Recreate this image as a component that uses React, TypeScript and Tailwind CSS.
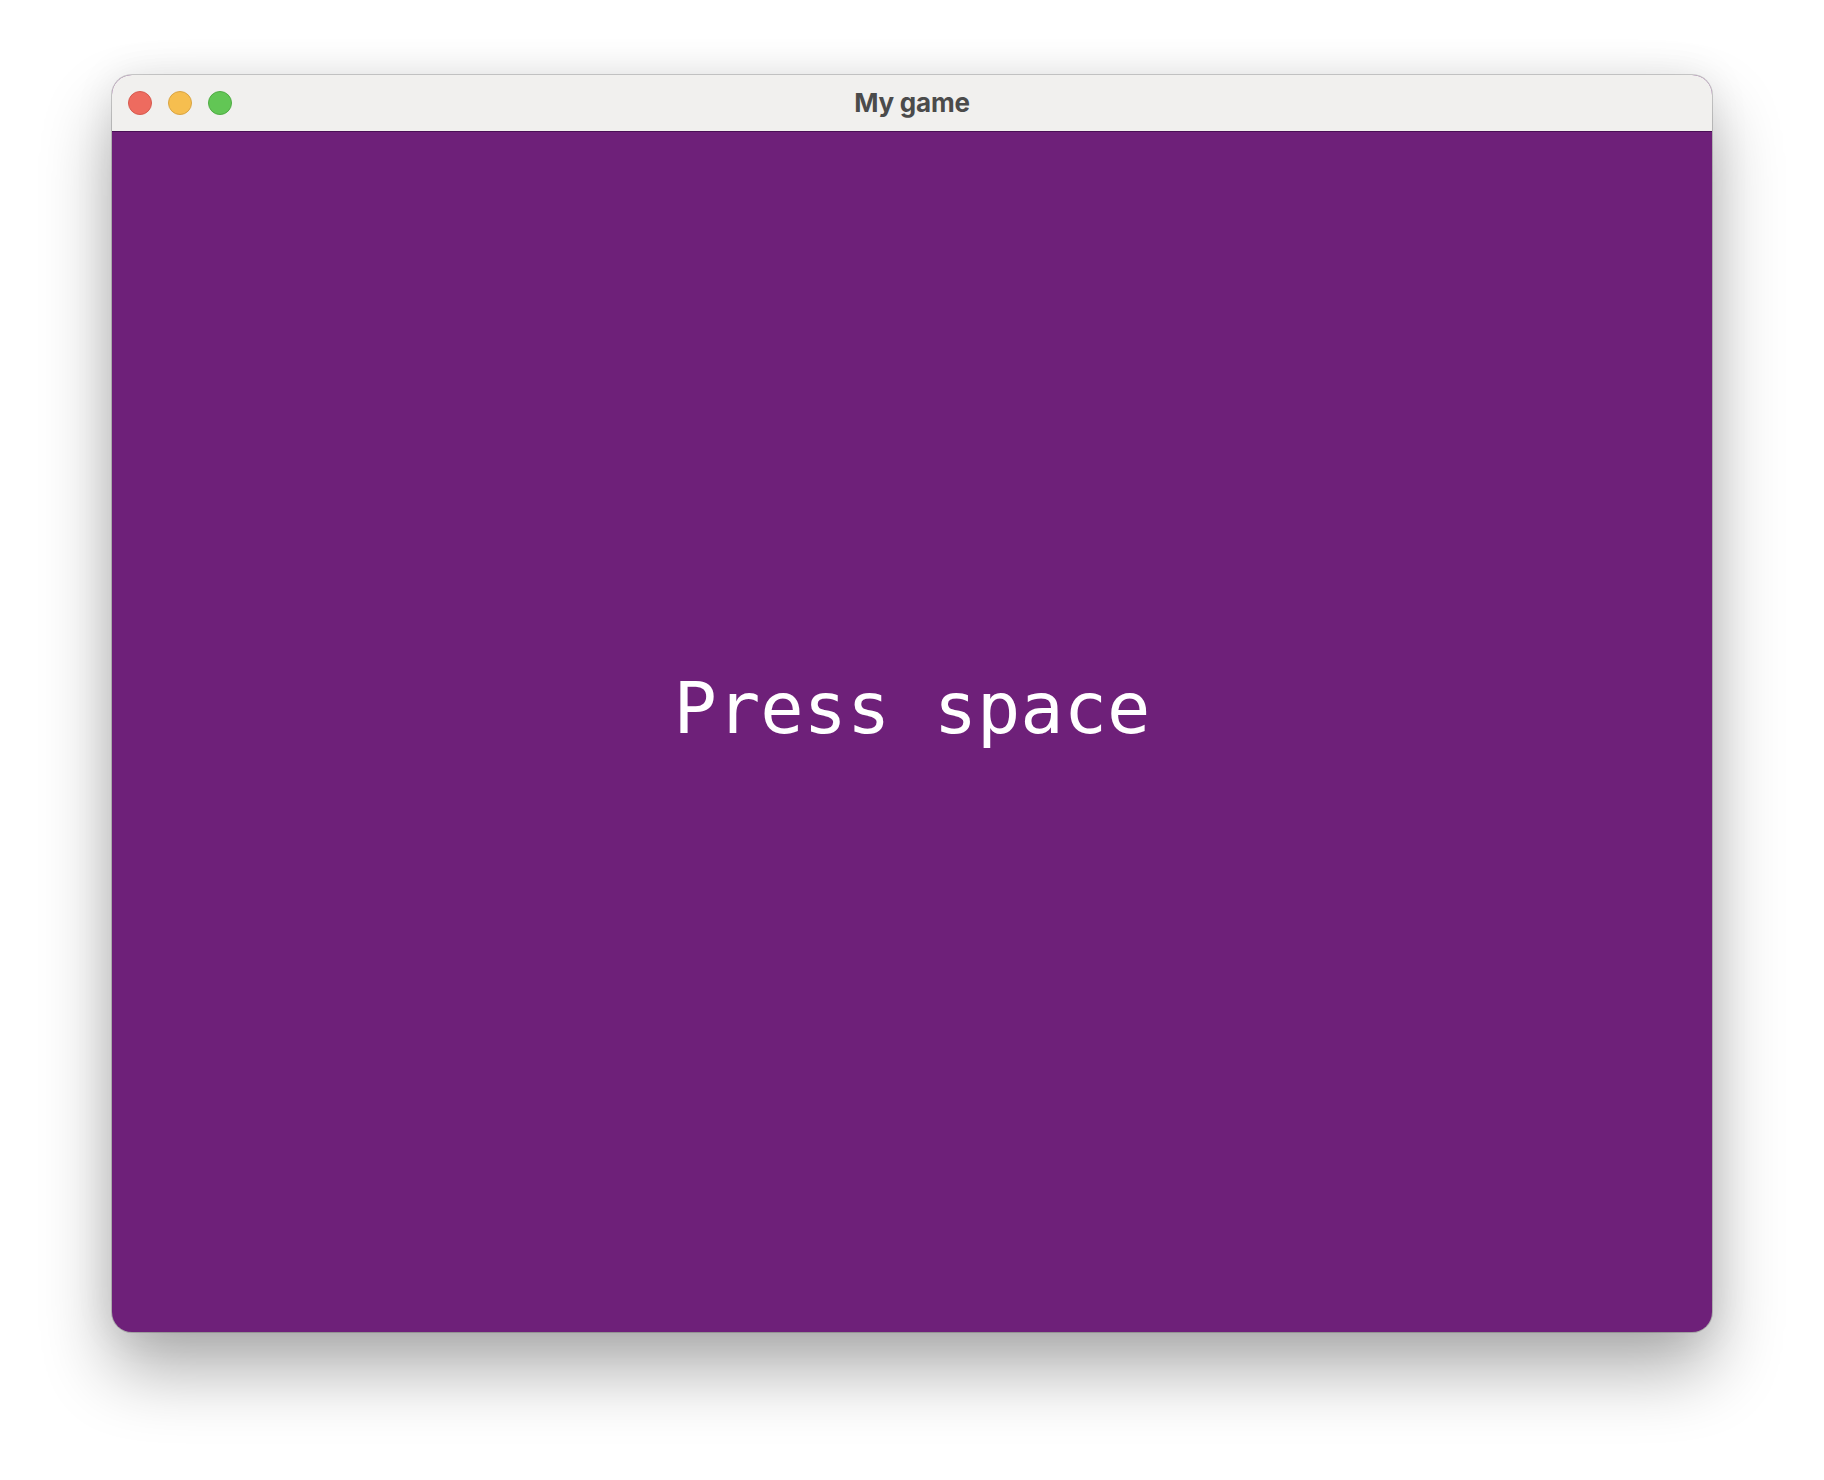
export default function App() {
  return (
    <div className="w-[1824px] h-[1480px] bg-white pt-[75px] pl-[112px]">
      {/* window */}
      <div className="w-[1600px] rounded-[20px] overflow-hidden bg-[#6e2079] shadow-[0_0_0_1px_rgba(0,0,0,0.18),0_38px_70px_rgba(0,0,0,0.32),0_0_40px_rgba(0,0,0,0.08)]">
        <div className="relative h-[57px] bg-[#f1f0ee] border-b border-[#4a0f55] flex items-center">
          <div className="flex items-center gap-[16px] pl-[16px] -mt-[1px]">
            <span className="w-[24px] h-[24px] rounded-full bg-[#ee6b5f] border border-[#d65a4f]" />
            <span className="w-[24px] h-[24px] rounded-full bg-[#f6be4f] border border-[#d9a444]" />
            <span className="w-[24px] h-[24px] rounded-full bg-[#62c655] border border-[#50ab44]" />
          </div>
          <div className="absolute inset-0 flex items-center justify-center">
            <span className="font-['Inter',sans-serif] font-bold text-[26px] text-[#4b4b4b] tracking-[-0.2px] -mt-[2px]">
              My game
            </span>
          </div>
        </div>
        <div className="h-[1200px] flex items-center justify-center">
          <span className="font-['DejaVu_Sans_Mono',monospace] text-[72px] leading-none text-white mb-[48px]">
            Press space
          </span>
        </div>
      </div>
    </div>
  );
}
